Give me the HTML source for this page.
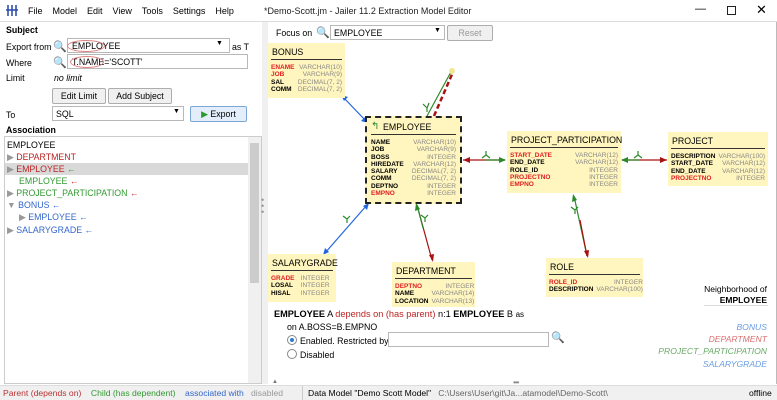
<!DOCTYPE html>
<html><head><meta charset="utf-8"><style>
*{box-sizing:border-box;margin:0;padding:0}
body{width:777px;height:400px;overflow:hidden;background:#fff;font-family:"Liberation Sans",sans-serif;font-size:8.8px;color:#000;position:relative}
.a{position:absolute;white-space:nowrap}
.tb{position:absolute;background:#fff5be;padding:2px 3px;white-space:nowrap}
.tb .h{font-size:8.8px;border-bottom:1.5px solid #333;padding:2px 1px 2px;margin-bottom:4px}
.tb table{border-collapse:collapse;font-size:6.5px;line-height:7.3px}
.tb td{padding:0;white-space:nowrap}
.tb td.n{font-weight:bold;padding-right:3px}
.tb td.t{color:#888;text-align:right}
.r{color:#e02020}
.inp{position:absolute;border:1px solid #b8b8b8;background:#fff;height:15px}
.btn{position:absolute;border:1px solid #adadad;background:#f0f0f0;height:16px;text-align:center;line-height:14px;border-radius:2px}
.tr{position:absolute;left:7px;font-size:8.8px}
</style></head><body>
<div class="a" style="left:0;top:0;width:777px;height:22px;border-bottom:1px solid #ddd"></div>
<svg class="a" style="left:6px;top:4px" width="12" height="13"><g stroke="#3050b0" stroke-width="1.6"><line x1="2" y1="1" x2="2" y2="12"/><line x1="6" y1="1" x2="6" y2="12"/><line x1="10" y1="1" x2="10" y2="12"/><line x1="0" y1="6" x2="12" y2="6"/></g></svg>
<div class="a" style="left:28px;top:6px;font-size:9px">File&nbsp;&nbsp;&nbsp;&nbsp;Model&nbsp;&nbsp;&nbsp;&nbsp;Edit&nbsp;&nbsp;&nbsp;&nbsp;View&nbsp;&nbsp;&nbsp;&nbsp;Tools&nbsp;&nbsp;&nbsp;&nbsp;Settings&nbsp;&nbsp;&nbsp;&nbsp;Help</div>
<div class="a" style="left:264px;top:6px;font-size:9px;color:#222">*Demo-Scott.jm - Jailer 11.2 Extraction Model Editor</div>
<div class="a" style="left:695px;top:3px;font-size:11px">—</div>
<div class="a" style="left:727px;top:6px;width:9px;height:9px;border:1px solid #222"></div>
<div class="a" style="left:756px;top:2px;font-size:13px">✕</div>

<div class="a" style="left:6px;top:25px;font-weight:bold">Subject</div>
<div class="a" style="left:6px;top:42px">Export from</div>
<div class="a" style="left:53px;top:40px;color:#3366cc;font-size:11px">🔍</div>
<div class="inp" style="left:67px;top:38px;width:163px"></div>
<div class="a" style="left:72px;top:41px">EMPLOYEE</div>
<div class="a" style="left:67px;top:40px;width:38px;height:12px;border:1px solid #e08080;border-radius:50%"></div>
<div class="a" style="left:216px;top:40px;font-size:7px">▼</div>
<div class="a" style="left:232px;top:42px">as T</div>
<div class="a" style="left:6px;top:58px">Where</div>
<div class="a" style="left:53px;top:56px;color:#3366cc;font-size:11px">🔍</div>
<div class="inp" style="left:67px;top:54px;width:181px"></div>
<div class="a" style="left:72px;top:57px">T.NAME='SCOTT'</div>
<div class="a" style="left:70px;top:56px;width:34px;height:12px;border:1px solid #e08080;border-radius:50%"></div>
<div class="a" style="left:6px;top:73px">Limit</div>
<div class="a" style="left:54px;top:73px;font-style:italic">no limit</div>
<div class="btn" style="left:52px;top:88px;width:54px">Edit Limit</div>
<div class="btn" style="left:108px;top:88px;width:64px">Add Subject</div>
<div class="a" style="left:6px;top:110px">To</div>
<div class="inp" style="left:52px;top:106px;width:132px"></div>
<div class="a" style="left:56px;top:109px">SQL</div>
<div class="a" style="left:173px;top:108px;font-size:7px">▼</div>
<div class="btn" style="left:190px;top:106px;width:57px;background:#e3eefa;border-color:#7aa7d8"><span style="color:#2a9a2a">▶</span> Export</div>
<div class="a" style="left:6px;top:125px;font-weight:bold">Association</div>
<div class="a" style="left:4px;top:136px;width:258px;height:248px;border:1px solid #ccc"></div>
<div class="a" style="left:248px;top:137px;width:13px;height:246px;background:#f0f0f0"></div>
<div class="a" style="left:250px;top:143px;width:9px;height:140px;background:#ccc"></div>
<div class="a" style="left:5px;top:163px;width:243px;height:12px;background:#d9d9d9"></div>
<div class="tr" style="top:140px">EMPLOYEE</div>
<div class="tr" style="top:152px;color:#999">▶ <span style="color:#b22">DEPARTMENT</span></div>
<div class="tr" style="top:164px;color:#999">▶ <span style="color:#b22">EMPLOYEE</span> <span style="color:#393">←</span></div>
<div class="tr" style="top:176px;left:19px;color:#393">EMPLOYEE <span style="color:#c33">←</span></div>
<div class="tr" style="top:188px;color:#999">▶ <span style="color:#393">PROJECT_PARTICIPATION</span> <span style="color:#c33">←</span></div>
<div class="tr" style="top:200px;color:#999">▼ <span style="color:#3366cc">BONUS ←</span></div>
<div class="tr" style="top:212px;left:19px;color:#999">▶ <span style="color:#3366cc">EMPLOYEE ←</span></div>
<div class="tr" style="top:225px;color:#999">▶ <span style="color:#3366cc">SALARYGRADE ←</span></div>
<div class="a" style="left:262px;top:22px;width:6px;height:362px;background:#f0f0f0"></div>
<div class="a" style="left:261px;top:197px;color:#999;font-size:9px;line-height:6px">•<br>•<br>•</div>

<div class="a" style="left:268px;top:22px;width:509px;height:362px;border-right:1px solid #bbb"></div>
<div class="a" style="left:276px;top:28px">Focus on</div>
<div class="a" style="left:316px;top:26px;color:#3366cc;font-size:11px">🔍</div>
<div class="inp" style="left:330px;top:25px;width:115px"></div>
<div class="a" style="left:334px;top:28px">EMPLOYEE</div>
<div class="a" style="left:434px;top:27px;font-size:7px">▼</div>
<div class="btn" style="left:447px;top:25px;width:46px;color:#999">Reset</div>

<svg class="a" style="left:0;top:0" width="777" height="400">
<g stroke-width="1.2" fill="none">
<line x1="343" y1="97" x2="366" y2="121" stroke="#2266dd"/>
<line x1="427" y1="116" x2="452" y2="70" stroke="#2a8a2a"/>
<line x1="434" y1="116" x2="453" y2="72" stroke="#aa1111" stroke-width="2.5" stroke-dasharray="5,3"/>
<line x1="463" y1="160" x2="505" y2="160" stroke="#aa1111"/>
<line x1="485" y1="160" x2="505" y2="160" stroke="#2a8a2a"/>
<line x1="622" y1="160" x2="667" y2="160" stroke="#aa1111"/>
<line x1="622" y1="160" x2="640" y2="160" stroke="#2a8a2a"/>
<line x1="574" y1="196" x2="587" y2="256" stroke="#2a8a2a"/>
<line x1="580" y1="220" x2="587" y2="256" stroke="#aa1111"/>
<line x1="367" y1="205" x2="325" y2="253" stroke="#2266dd"/>
<line x1="417" y1="205" x2="432" y2="260" stroke="#aa1111"/>
<line x1="417" y1="205" x2="423" y2="228" stroke="#2a8a2a"/>
</g>
<circle cx="452" cy="71" r="3" fill="#f0e890"/>
<g fill="#2266dd"><path d="M341 95 l7 2 -4 4z"/><path d="M368 123 l-7-2 4-4z"/><path d="M369 203 l-2 7 -4-4z"/><path d="M323 255 l2-7 4 4z"/></g>
<g fill="#aa1111"><path d="M463 160 l7-3 0 6z"/><path d="M667 160 l-7-3 0 6z"/><path d="M588 258 l-4-7 5-1z"/><path d="M433 262 l-4-7 5-1z"/></g>
<g fill="#2a8a2a"><path d="M506 160 l-7-3 0 6z"/><path d="M621 160 l7-3 0 6z"/><path d="M573 194 l-1 8 5-2z"/><path d="M416 203 l-1 8 5-2z"/></g>
<g stroke="#2a8a2a" fill="none" stroke-width="1.2"><path d="M427 108 l-4-4 M427 108 l2-5 M427 108 v4"/><path d="M575 210 l-4-3 M575 210 l3-3 M575 210 v4"/><path d="M638 155 l-4 3 M638 155 l4 3 M638 155 v-4"/><path d="M486 155 l-4 3 M486 155 l4 3 M486 155 v-4"/><path d="M425 218 l-4-3 M425 218 l3-3 M425 218 v4"/><path d="M347 219 l-4-3 M347 219 l3-3 M347 219 v4"/></g>
</svg>

<div class="tb" style="left:268px;top:43px;width:77px;height:55px"><div class="h">BONUS</div><table style="width:100%">
<tr><td class="n r">ENAME</td><td class="t">VARCHAR(10)</td></tr><tr><td class="n r">JOB</td><td class="t">VARCHAR(9)</td></tr><tr><td class="n">SAL</td><td class="t">DECIMAL(7, 2)</td></tr><tr><td class="n">COMM</td><td class="t">DECIMAL(7, 2)</td></tr></table></div>

<div class="tb" style="left:365px;top:116px;width:97px;height:88px;border:2px dashed #222;padding:2px 4px"><div class="h" style="padding-left:12px"><span class="a" style="left:4px;top:3px;color:#2a8a2a;font-size:10px">↰</span>EMPLOYEE</div><table style="width:100%">
<tr><td class="n">NAME</td><td class="t">VARCHAR(10)</td></tr><tr><td class="n">JOB</td><td class="t">VARCHAR(9)</td></tr><tr><td class="n">BOSS</td><td class="t">INTEGER</td></tr><tr><td class="n">HIREDATE</td><td class="t">VARCHAR(12)</td></tr><tr><td class="n">SALARY</td><td class="t">DECIMAL(7, 2)</td></tr><tr><td class="n">COMM</td><td class="t">DECIMAL(7, 2)</td></tr><tr><td class="n">DEPTNO</td><td class="t">INTEGER</td></tr><tr><td class="n r">EMPNO</td><td class="t">INTEGER</td></tr></table></div>

<div class="tb" style="left:507px;top:131px;width:114px;height:62px"><div class="h">PROJECT_PARTICIPATION</div><table style="width:100%">
<tr><td class="n r">START_DATE</td><td class="t">VARCHAR(12)</td></tr><tr><td class="n">END_DATE</td><td class="t">VARCHAR(12)</td></tr><tr><td class="n">ROLE_ID</td><td class="t">INTEGER</td></tr><tr><td class="n r">PROJECTNO</td><td class="t">INTEGER</td></tr><tr><td class="n r">EMPNO</td><td class="t">INTEGER</td></tr></table></div>

<div class="tb" style="left:668px;top:132px;width:100px;height:54px"><div class="h">PROJECT</div><table style="width:100%">
<tr><td class="n">DESCRIPTION</td><td class="t">VARCHAR(100)</td></tr><tr><td class="n">START_DATE</td><td class="t">VARCHAR(12)</td></tr><tr><td class="n">END_DATE</td><td class="t">VARCHAR(12)</td></tr><tr><td class="n r">PROJECTNO</td><td class="t">INTEGER</td></tr></table></div>

<div class="tb" style="left:268px;top:254px;width:68px;height:48px"><div class="h">SALARYGRADE</div><table style="width:100%">
<tr><td class="n r">GRADE</td><td class="t" style="text-align:left">INTEGER</td></tr><tr><td class="n">LOSAL</td><td class="t" style="text-align:left">INTEGER</td></tr><tr><td class="n">HISAL</td><td class="t" style="text-align:left">INTEGER</td></tr></table></div>

<div class="tb" style="left:392px;top:262px;width:83px;height:45px"><div class="h">DEPARTMENT</div><table style="width:100%">
<tr><td class="n r">DEPTNO</td><td class="t">INTEGER</td></tr><tr><td class="n">NAME</td><td class="t">VARCHAR(14)</td></tr><tr><td class="n">LOCATION</td><td class="t">VARCHAR(13)</td></tr></table></div>

<div class="tb" style="left:546px;top:258px;width:97px;height:39px"><div class="h">ROLE</div><table style="width:100%">
<tr><td class="n r">ROLE_ID</td><td class="t">INTEGER</td></tr><tr><td class="n">DESCRIPTION</td><td class="t">VARCHAR(100)</td></tr></table></div>

<div class="a" style="right:10px;top:284px;text-align:right;line-height:11px;font-size:8.5px">Neighborhood of<br><b>EMPLOYEE</b></div>
<div class="a" style="left:704px;top:305px;width:64px;border-top:1px solid #ddd"></div>

<div class="a" style="left:274px;top:309px;font-size:9.2px"><b>EMPLOYEE</b> A <span style="color:#b22">depends on (has parent)</span> n:1 <b>EMPLOYEE</b> B <span style="font-size:8px">as</span></div>
<div class="a" style="left:287px;top:322px;font-size:8.8px">on A.BOSS=B.EMPNO</div>
<div class="a" style="left:287px;top:335px;width:10px;height:10px;border:1px solid #888;border-radius:50%;background:#fff"><div style="margin:2px;width:4px;height:4px;border-radius:50%;background:#2a7ad8"></div></div>
<div class="a" style="left:300px;top:336px">Enabled. Restricted by</div>
<div class="inp" style="left:388px;top:332px;width:161px;height:15px"></div>
<div class="a" style="left:551px;top:331px;color:#3366cc;font-size:11px">🔍</div>
<div class="a" style="left:287px;top:349px;width:10px;height:10px;border:1px solid #888;border-radius:50%"></div>
<div class="a" style="left:300px;top:350px">Disabled</div>
<div class="a" style="right:10px;top:321px;text-align:right;font-style:italic;line-height:12.2px;font-size:8.6px"><span style="color:#6b9de0">BONUS</span><br><span style="color:#d87070">DEPARTMENT</span><br><span style="color:#6aaa6a">PROJECT_PARTICIPATION</span><br><span style="color:#6b9de0">SALARYGRADE</span></div>
<div class="a" style="left:513px;top:378px;color:#888;font-size:8px;letter-spacing:-1px">•••</div>
<div class="a" style="left:272px;top:379px;color:#777;font-size:6px">▲</div>

<div class="a" style="left:0;top:385px;width:777px;height:15px;background:#f0f0f0;border-top:1px solid #ddd"></div>
<div class="a" style="left:3px;top:388px;font-size:8.6px"><span style="color:#b33">Parent (depends on)</span>&nbsp;&nbsp;&nbsp;&nbsp;<span style="color:#393">Child (has dependent)</span>&nbsp;&nbsp;&nbsp;&nbsp;<span style="color:#3366cc">associated with</span>&nbsp;&nbsp;&nbsp;<span style="color:#999">disabled</span></div>
<div class="a" style="left:302px;top:386px;height:14px;border-left:1px solid #ccc"></div>
<div class="a" style="left:308px;top:388px;font-size:8.6px">Data Model "Demo Scott Model"&nbsp;&nbsp;&nbsp;<span style="color:#666">C:\Users\User\git\Ja...atamodel\Demo-Scott\</span></div>
<div class="a" style="left:749px;top:388px;font-size:8.6px">offline</div>
</body></html>
